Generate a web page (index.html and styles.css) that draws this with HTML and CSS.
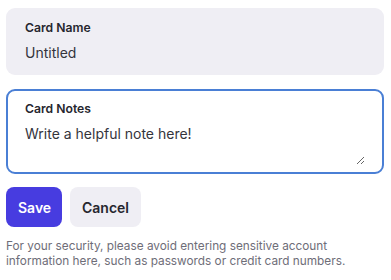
FILE: index.html
```html
<!DOCTYPE html>
<html>
<head>
<meta charset="utf-8">
<link rel="stylesheet" href="styles.css">
</head>
<body>
<form class="card-form">
  <label class="field">
    <span class="field-label">Card Name</span>
    <input class="field-input" type="text" value="Untitled">
  </label>
  <label class="field field-focused">
    <span class="field-label">Card Notes</span>
    <textarea class="field-textarea" placeholder="Write a helpful note here!"></textarea>
  </label>
  <div class="actions">
    <button type="button" class="btn btn-primary">Save</button>
    <button type="button" class="btn btn-secondary">Cancel</button>
  </div>
  <p class="notice">For your security, please avoid entering sensitive account information here, such as passwords or credit card numbers.</p>
</form>
</body>
</html>
```
FILE: styles.css
```css
html, body {
  margin: 0;
  padding: 0;
  background: #ffffff;
}
body {
  font-family: Inter, "Noto Sans", sans-serif;
  color: #26262e;
}
.card-form {
  display: flex;
  flex-direction: column;
  padding: 8px 7px 0 6px;
}
.field {
  display: flex;
  flex-direction: column;
  background: #efeef4;
  border: 2px solid transparent;
  border-radius: 9px;
  padding: 10px 17px 9px;
  margin-bottom: 14px;
}
.field-focused {
  background: #ffffff;
  border-color: #4a7fd5;
  padding-bottom: 7px;
  margin-bottom: 13px;
}
.field-label {
  font-size: 12.2px;
  font-weight: 600;
  line-height: 16px;
  color: #26262e;
}
.field-input,
.field-textarea {
  font-family: Inter, "Noto Sans", sans-serif;
  font-size: 14px;
  color: #34343c;
  border: 0;
  background: transparent;
  padding: 0;
  margin: 6px 0 0;
  outline: none;
  line-height: 22px;
}
.field-textarea {
  height: 42px;
  resize: vertical;
}
.field-textarea::placeholder {
  color: #34343c;
  opacity: 1;
}
.actions {
  display: flex;
  gap: 8px;
}
.btn {
  font-family: Inter, "Noto Sans", sans-serif;
  font-size: 14px;
  font-weight: 600;
  height: 40px;
  border: 0;
  border-radius: 8px;
  padding: 0 12px;
  cursor: pointer;
}
.btn-primary {
  background: #473ce0;
  color: #ffffff;
  width: 56px;
}
.btn-secondary {
  background: #efeef4;
  color: #26262e;
  width: 71px;
}
.notice {
  margin: 12px 0 0;
  font-size: 11.8px;
  line-height: 15px;
  color: #6e6d78;
}
```
